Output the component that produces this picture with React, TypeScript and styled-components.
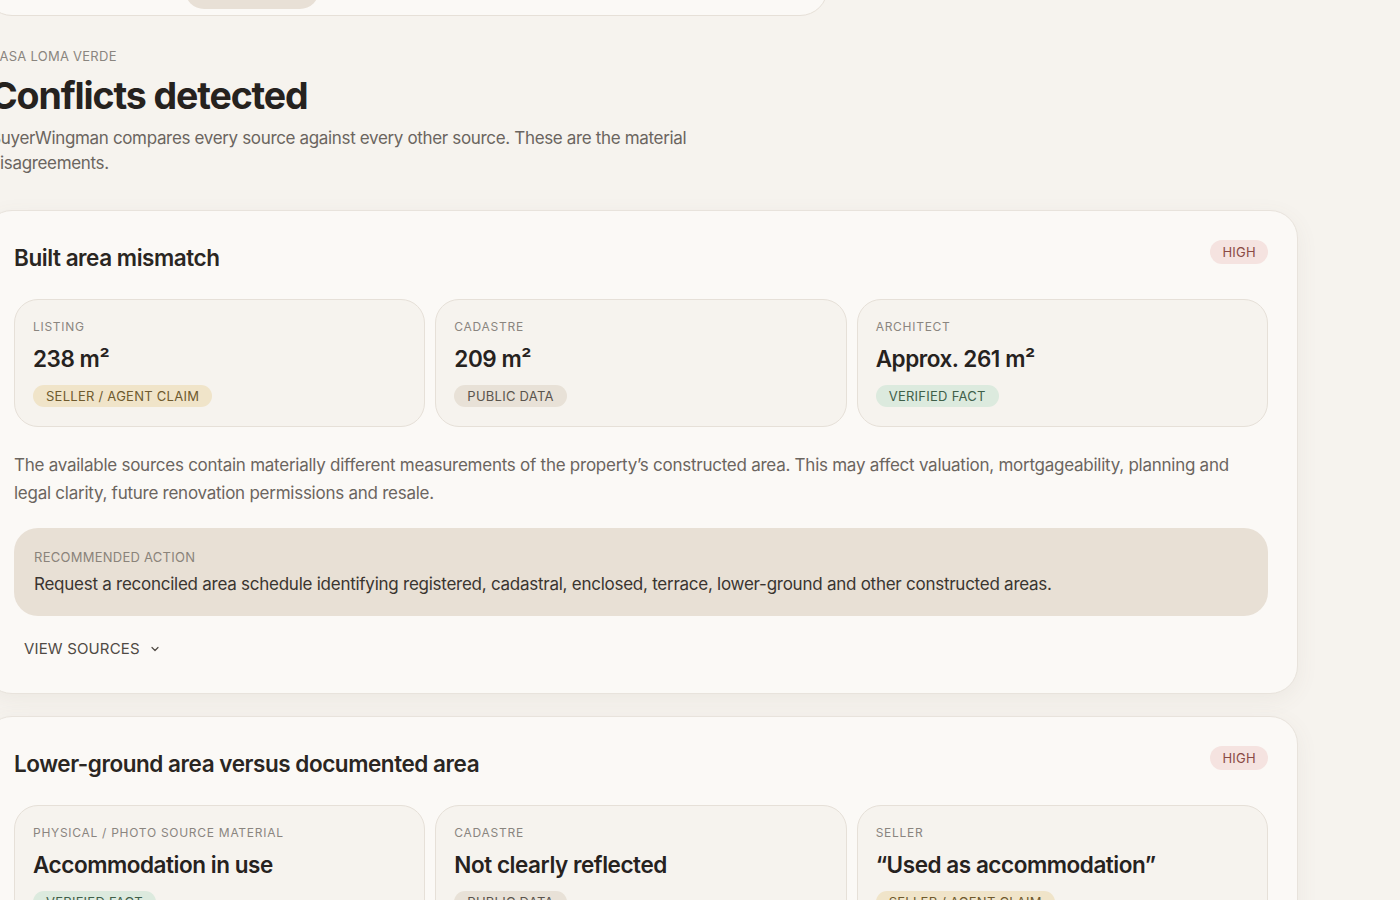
import React from "react";
import styled, { createGlobalStyle } from "styled-components";

const Global = createGlobalStyle`
  html, body { margin: 0; padding: 0; background: #f6f3ee; }
  body {
    font-family: Inter, "Noto Sans", sans-serif;
    color: #2a2622;
    overflow: hidden;
    -webkit-font-smoothing: antialiased;
  }
`;

const Page = styled.div`
  width: 1314px;
  margin-left: -16px;
  display: flex;
  flex-direction: column;
`;

const TabBar = styled.div`
  width: 844px;
  height: 52px;
  margin-top: -36px;
  box-sizing: border-box;
  padding: 6px 6px 6px 200px;
  display: flex;
  gap: 8px;
  background: #fbf9f6;
  border: 1px solid #e6e0d8;
  border-radius: 0 0 28px 28px;
`;

const Tab = styled.div<{ $active?: boolean }>`
  width: 134px;
  border-radius: 20px;
  background: ${(p) => (p.$active ? "#e8e0d6" : "transparent")};
  display: flex;
  align-items: center;
  justify-content: center;
  font-size: 14px;
  color: #4a453f;
`;

const Intro = styled.header`
  margin-top: 31px;
  padding-left: 6px;
  display: flex;
  flex-direction: column;
`;

const Eyebrow = styled.div`
  font-size: 13px;
  letter-spacing: 0.02em;
  text-transform: uppercase;
  color: #8a857f;
  line-height: 18px;
`;

const Heading = styled.h1`
  margin: 8px 0 0;
  font-size: 37.5px;
  line-height: 46px;
  font-weight: 700;
  letter-spacing: -0.03em;
  color: #26221e;
`;

const Lede = styled.p`
  margin: 7px 0 0;
  max-width: 720px;
  font-size: 17px;
  line-height: 25px;
  letter-spacing: -0.02em;
  color: #6b655f;
`;

const CardList = styled.div`
  margin-top: 34px;
  display: flex;
  flex-direction: column;
  gap: 22px;
`;

const Card = styled.section`
  background: #fbf9f6;
  border: 1px solid #e8e3dc;
  border-radius: 28px;
  padding: 29px;
  box-shadow: 0 6px 22px rgba(120, 100, 80, 0.07);
  display: flex;
  flex-direction: column;
`;

const CardHead = styled.div`
  display: flex;
  justify-content: space-between;
  align-items: flex-start;
  margin-bottom: 23px;
`;

const CardTitle = styled.h2`
  margin: 0;
  font-size: 22.5px;
  line-height: 36px;
  font-weight: 600;
  letter-spacing: -0.02em;
  color: #2a2622;
`;

const Severity = styled.span`
  height: 24px;
  padding: 0 12px;
  border-radius: 12px;
  background: #f5e3e0;
  color: #8a4a45;
  font-size: 13px;
  letter-spacing: 0.02em;
  display: inline-flex;
  align-items: center;
`;

const SourceGrid = styled.div`
  display: grid;
  grid-template-columns: repeat(3, 1fr);
  gap: 10px;
`;

const SourceBox = styled.div`
  height: 128px;
  box-sizing: border-box;
  background: #f6f3ee;
  border: 1px solid #e6e0d8;
  border-radius: 24px;
  padding: 19px 18px;
  display: flex;
  flex-direction: column;
  align-items: flex-start;
`;

const SourceLabel = styled.div`
  font-size: 12px;
  line-height: 16px;
  letter-spacing: 0.06em;
  text-transform: uppercase;
  color: #8a857f;
`;

const SourceValue = styled.div`
  margin-top: 9px;
  font-size: 22.5px;
  line-height: 30px;
  font-weight: 600;
  letter-spacing: -0.02em;
  color: #26221e;
`;

const tagColours = {
  claim: { bg: "#f0e4c9", fg: "#6e5a2e" },
  public: { bg: "#e8e1d7", fg: "#5a544d" },
  verified: { bg: "#dceade", fg: "#3f6049" },
};

type TagKind = keyof typeof tagColours;

const Tag = styled.span<{ $kind: TagKind }>`
  margin-top: 11px;
  height: 24px;
  padding: 0 13px;
  border-radius: 12px;
  background: ${(p) => tagColours[p.$kind].bg};
  color: ${(p) => tagColours[p.$kind].fg};
  font-size: 13px;
  letter-spacing: 0.02em;
  display: inline-flex;
  align-items: center;
  white-space: nowrap;
`;

const Explanation = styled.p`
  margin: 24px 0 0;
  font-size: 17px;
  line-height: 28px;
  letter-spacing: -0.015em;
  color: #6b655f;
`;

const ActionBox = styled.div`
  margin-top: 21px;
  background: #e8e0d5;
  border-radius: 24px;
  padding: 20px;
  display: flex;
  flex-direction: column;
  gap: 6px;
`;

const ActionLabel = styled.div`
  font-size: 13px;
  line-height: 18px;
  letter-spacing: 0.02em;
  text-transform: uppercase;
  color: #8a837a;
`;

const ActionText = styled.div`
  font-size: 17px;
  line-height: 24px;
  letter-spacing: -0.015em;
  color: #3a3530;
`;

const Toggle = styled.button`
  margin-top: 17px;
  align-self: flex-start;
  border: 0;
  background: none;
  padding: 6px 10px;
  font-family: inherit;
  font-size: 15px;
  letter-spacing: 0.01em;
  color: #4f4a44;
  display: inline-flex;
  align-items: center;
  gap: 9px;
  cursor: pointer;
`;

const Chevron = () => (
  <svg width="12" height="12" viewBox="0 0 24 24" fill="none" stroke="currentColor" strokeWidth="2.4" strokeLinecap="round" strokeLinejoin="round">
    <path d="m6 9 6 6 6-6" />
  </svg>
);

type Source = { label: string; value: string; tag: TagKind; tagText: string };

type Conflict = {
  title: string;
  sources: Source[];
  explanation?: string;
  action?: string;
};

const conflicts: Conflict[] = [
  {
    title: "Built area mismatch",
    sources: [
      { label: "Listing", value: "238 m²", tag: "claim", tagText: "Seller / agent claim" },
      { label: "Cadastre", value: "209 m²", tag: "public", tagText: "Public data" },
      { label: "Architect", value: "Approx. 261 m²", tag: "verified", tagText: "Verified fact" },
    ],
    explanation:
      "The available sources contain materially different measurements of the property’s constructed area. This may affect valuation, mortgageability, planning and legal clarity, future renovation permissions and resale.",
    action:
      "Request a reconciled area schedule identifying registered, cadastral, enclosed, terrace, lower-ground and other constructed areas.",
  },
  {
    title: "Lower-ground area versus documented area",
    sources: [
      { label: "Physical / photo source material", value: "Accommodation in use", tag: "verified", tagText: "Verified fact" },
      { label: "Cadastre", value: "Not clearly reflected", tag: "public", tagText: "Public data" },
      { label: "Seller", value: "“Used as accommodation”", tag: "claim", tagText: "Seller / agent claim" },
    ],
    explanation:
      "Rooms described and photographed as living space on the lower-ground level do not appear clearly in the registered or cadastral records.",
    action: "Ask for the licence or legalisation file covering the lower-ground accommodation.",
  },
];

function ConflictCard({ c }: { c: Conflict }) {
  return (
    <Card>
      <CardHead>
        <CardTitle>{c.title}</CardTitle>
        <Severity>HIGH</Severity>
      </CardHead>
      <SourceGrid>
        {c.sources.map((s) => (
          <SourceBox key={s.label}>
            <SourceLabel>{s.label}</SourceLabel>
            <SourceValue>{s.value}</SourceValue>
            <Tag $kind={s.tag}>{s.tagText.toUpperCase()}</Tag>
          </SourceBox>
        ))}
      </SourceGrid>
      {c.explanation && <Explanation>{c.explanation}</Explanation>}
      {c.action && (
        <ActionBox>
          <ActionLabel>Recommended action</ActionLabel>
          <ActionText>{c.action}</ActionText>
        </ActionBox>
      )}
      <Toggle>
        VIEW SOURCES <Chevron />
      </Toggle>
    </Card>
  );
}

export default function App() {
  return (
    <>
      <Global />
      <Page>
        <TabBar>
          <Tab $active>Conflicts</Tab>
        </TabBar>
        <Intro>
          <Eyebrow>Casa Loma Verde</Eyebrow>
          <Heading>Conflicts detected</Heading>
          <Lede>
            BuyerWingman compares every source against every other source. These are the material
            disagreements.
          </Lede>
        </Intro>
        <CardList>
          {conflicts.map((c) => (
            <ConflictCard key={c.title} c={c} />
          ))}
        </CardList>
      </Page>
    </>
  );
}
